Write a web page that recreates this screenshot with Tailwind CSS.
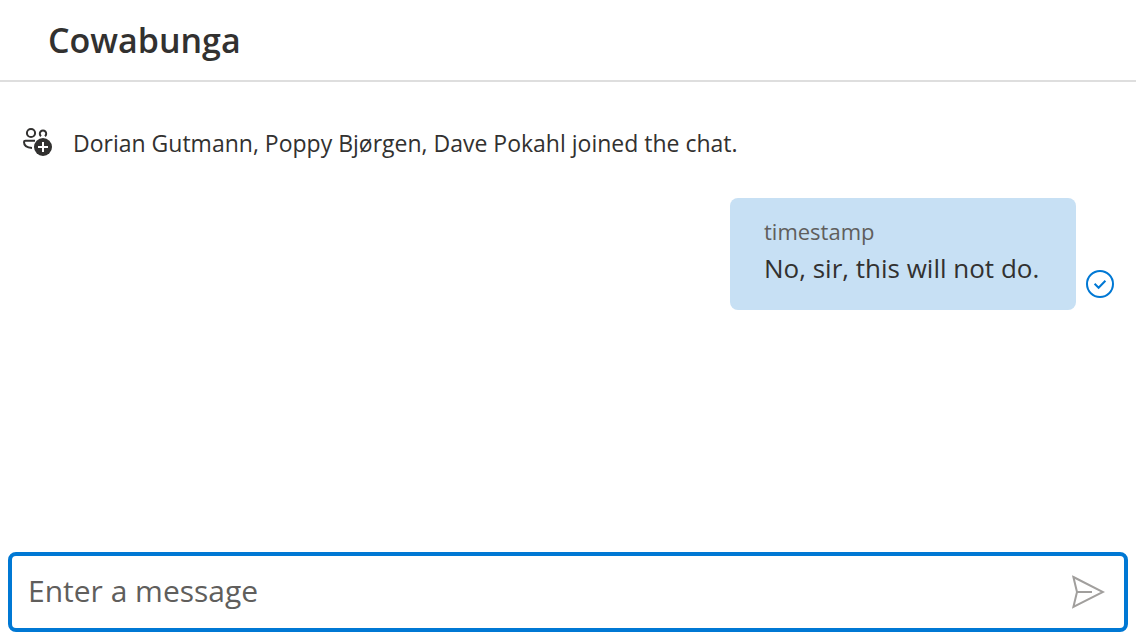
<!DOCTYPE html>
<html lang="en">
<head>
<meta charset="utf-8">
<meta name="viewport" content="width=device-width, initial-scale=1">
<title>Cowabunga</title>
<script src="https://cdn.jsdelivr.net/npm/@tailwindcss/browser@4"></script>
</head>
<body class="flex min-h-screen flex-col bg-white font-['Open_Sans','Noto_Sans',sans-serif] text-[#323130]">
  <header class="border-b-2 border-[#dedede] px-12 py-4">
    <h1 class="text-[34px] leading-12 font-semibold">Cowabunga</h1>
  </header>

  <main class="flex flex-1 flex-col gap-9 px-[22px] pt-11">
    <div class="flex items-start gap-[21px] pb-0.5">
      <svg class="mt-px size-[30px] shrink-0" viewBox="0 0 30 30" fill="none" stroke="#323130" stroke-width="2" aria-hidden="true">
        <circle cx="9" cy="6" r="4.100"/>
        <path d="M19 9.200a3.200 3.200 0 1 1 4 0"/>
        <path d="M13 13.700H3.400c-.8 0-1.400.5-1.400 1.300 0 3.400 2.600 5.700 8 6"/>
        <circle cx="21" cy="20" r="9" fill="#323130" stroke="none"/>
        <path d="M21 15v10M16 20h10" stroke="#fff"/>
      </svg>
      <p class="text-[23px] leading-[34px]">Dorian Gutmann, Poppy Bjørgen, Dave Pokahl joined the chat.</p>
    </div>

    <div class="flex items-end justify-end gap-[10px]">
      <div class="min-w-[346px] rounded-lg bg-[#c7e0f4] px-[34px] pt-4 pb-6">
        <div class="text-[22px] leading-[34px] text-[#605e5c]">timestamp</div>
        <p class="pt-0.5 text-[26px] leading-9">No, sir, this will not do.</p>
      </div>
      <svg class="mb-3 size-7 shrink-0" viewBox="0 0 28 28" fill="none" stroke="#0078d4" stroke-width="2" role="img" aria-label="Sent">
        <circle cx="14" cy="14" r="13"/>
        <path d="M8.600 13.800l4 4 6.800-7"/>
      </svg>
    </div>
  </main>

  <form class="m-2 flex items-center rounded-lg border-4 border-[#0078d4] pr-[15px] pl-4">
    <input type="text" aria-label="Enter a message" placeholder="Enter a message" class="h-18 min-w-0 flex-1 bg-transparent pb-1 text-[30px] outline-none placeholder:text-[#605e5c]">
    <button type="button" aria-label="Send message" class="p-1">
      <svg class="size-[34px]" viewBox="0 0 34 34" fill="none" stroke="#a19f9d" stroke-width="2" aria-hidden="true">
        <path d="M2.400 2L32 17 2.400 32 6 17zM6 17h15"/>
      </svg>
    </button>
  </form>
</body>
</html>
